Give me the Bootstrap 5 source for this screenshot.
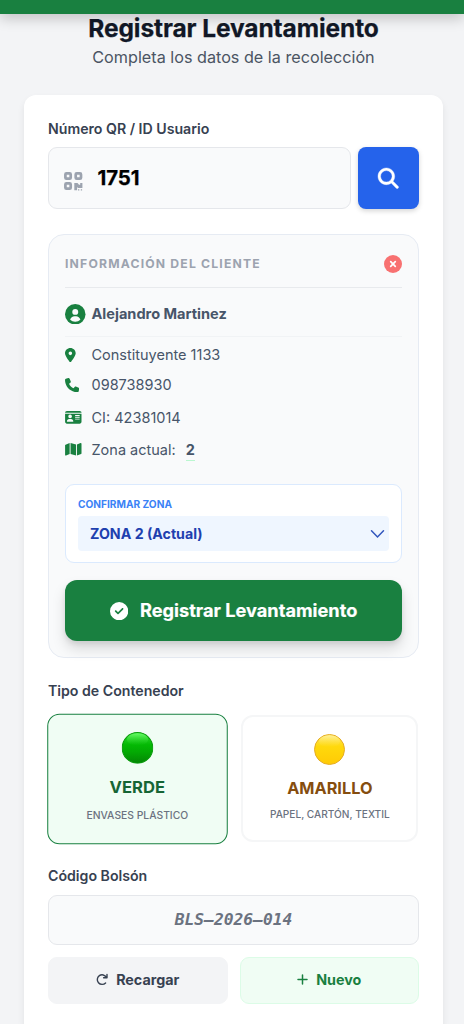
<!DOCTYPE html>
<html lang="es">
<head>
<meta charset="utf-8">
<meta name="viewport" content="width=device-width, initial-scale=1">
<title>Registrar Levantamiento</title>
<link href="https://cdn.jsdelivr.net/npm/bootstrap@5.3.0/dist/css/bootstrap.min.css" rel="stylesheet">
<style>
body{font-family:Inter,sans-serif;background:#f3f4f6;color:#374151}
svg{display:block;flex:none}
.topbar{height:14px;flex:none;background:#198040;box-shadow:0 4px 14px rgba(0,0,0,.22);z-index:5}
.page{padding:0 21px 0 24px}
.title{font-size:24.5px;font-weight:700;line-height:32px;color:#111827;margin-top:-2px;letter-spacing:-.1px;-webkit-text-stroke:.25px}
.subtitle{font-size:16.2px;line-height:24px;color:#4b5563;padding-top:1px}
.panel{background:#fff;border-radius:12px 12px 0 0;margin-top:26px;padding:24px 24px 0;box-shadow:0 4px 7px rgba(0,0,0,.08)}
.lbl{font-size:14.15px;font-weight:600;line-height:20px;color:#374151}
.field{background:#f9fafb;border:1px solid #e5e7eb;border-radius:9px}
.qr{height:62px;padding-left:15px;color:#9ca3af}
.qr span{font-size:20.4px;font-weight:700;color:#000;margin-left:14.5px;line-height:28px;letter-spacing:-.1px;-webkit-text-stroke:.25px}
.find{width:61px;height:62px;background:#2563eb;border-radius:8px;box-shadow:0 2px 5px rgba(0,0,0,.17);color:#fff;border:0}
.client{margin-top:25px;height:424px;background:#f9fafb;border:1px solid #e6ebf3;border-radius:16px;padding:0 16px}
.client-head{height:53px;padding-top:6px;border-bottom:1px solid #e8eaed;font-size:12.2px;font-weight:700;letter-spacing:1.18px;color:#9ca3af}
.client-name{height:49px;padding-top:4px;border-bottom:1px solid #f1f3f5;font-size:14.55px;font-weight:700;color:#475569}
.client-name span:last-child{padding-top:1px}
.info-row{height:32.2px;font-size:14.5px;color:#475569}
.green{color:#198040}
.icon-col{width:26.5px}
.zone-now{margin-left:10px;font-weight:700;border-bottom:1px solid #bbf7d0;line-height:20px;padding-top:1px}
.zone{margin-top:18.5px;height:79px;background:#fff;border:1px solid #dbeafe;border-radius:9px;padding:9px 12px}
.zone-label{font-size:10.15px;font-weight:700;line-height:20px;color:#3b82f6}
.zone-select{height:35px;margin-top:2px;background:#eff6ff;border-radius:4px;padding:0 4px 0 12px;font-size:14.2px;font-weight:700;color:#1e40af}
.submit{height:61px;margin-top:17px;background:#198040;border-radius:12px;color:#fff;font-size:18.2px;font-weight:700;-webkit-text-stroke:.2px;box-shadow:0 8px 14px rgba(0,0,0,.13),0 3px 5px rgba(0,0,0,.08)}
.types{gap:16px;margin-top:13.5px;padding-left:.8px}
.type{width:176.7px;height:127.5px;border-radius:12px;border:2px solid #f5f6f7;background:#fff;padding-top:15px}
.type.active{background:#f0fdf4;border:1.5px solid #198040;border-width:1.5px;transform:scale(1.02)}
.type-name{font-size:16.3px;font-weight:700;line-height:24px;margin-top:11px}
.type-note{font-size:10.15px;font-weight:500;line-height:15px;color:#6b7280;margin-top:7.5px}
.ball{width:31px;height:31px;margin-top:2px}
.code{height:49.5px;margin-top:9px;font-family:"DejaVu Sans Mono",monospace;font-size:16.3px;font-weight:700;font-style:italic;color:#6b7280}
.act{height:46.5px;width:179.5px;border-radius:9px;font-size:14.3px;font-weight:700;border:1px solid #f3f4f6;background:#f3f4f6;color:#374151;gap:8px;padding:0 0 2px}
.act.new{background:#f0fdf4;border-color:#dcfce7;color:#198040}
</style>
</head>
<body class="vh-100 overflow-hidden d-flex flex-column">
<header class="topbar position-relative"></header>
<main class="page flex-grow-1 d-flex flex-column">
  <div class="text-center">
    <h1 class="title mb-0">Registrar Levantamiento</h1>
    <p class="subtitle mb-0">Completa los datos de la recolección</p>
  </div>
  <section class="panel flex-grow-1">
    <div class="lbl">Número QR / ID Usuario</div>
    <div class="d-flex justify-content-between mt-2">
      <div class="field qr d-flex align-items-center flex-grow-1" style="margin-right:7px">
        <svg width="19" height="19" viewBox="0 0 19 19" style="margin-top:6px" fill="none" stroke="currentColor"><g stroke-width="2.7"><rect x="1.4" y="1.4" width="5.3" height="5.3" rx="1"/><rect x="11.7" y="1.4" width="5.3" height="5.3" rx="1"/><rect x="1.4" y="11.4" width="5.3" height="5.3" rx="1"/></g><path fill="currentColor" stroke="none" d="M10.3 11h3.2l1.5 1.8h1.2V11h2.2v5h-4.4l-.9-1v3.2h-2.8zM14 17.2h1.3v1.2H14zM16.8 17.2h1.3v1.2h-1.3z"/></svg>
        <span>1751</span>
      </div>
      <button class="find d-flex align-items-center justify-content-center p-0" aria-label="Buscar"><svg width="20.5" height="20.5" viewBox="0 0 512 512" fill="currentColor" stroke="currentColor" stroke-width="10" overflow="visible"><path d="M416 208c0 45.9-14.9 88.3-40 122.7L502.6 457.4c12.5 12.5 12.5 32.8 0 45.3s-32.8 12.5-45.3 0L330.7 376c-34.4 25.2-76.8 40-122.7 40C93.1 416 0 322.9 0 208S93.1 0 208 0S416 93.1 416 208zM208 352a144 144 0 1 0 0-288 144 144 0 1 0 0 288z"/></svg></button>
    </div>
    <div class="client">
      <div class="client-head d-flex align-items-center justify-content-between">
        <span>INFORMACIÓN DEL CLIENTE</span>
        <svg width="18" height="18" viewBox="0 0 18 18"><circle cx="9" cy="9" r="9" fill="#f87171"/><path d="M6.7 6.7l4.6 4.6M11.3 6.7l-4.6 4.6" stroke="#fff" stroke-width="1.7" stroke-linecap="round"/></svg>
      </div>
      <div class="client-name d-flex align-items-center">
        <span class="icon-col"><svg width="20.5" height="20.5" viewBox="0 0 20 20"><circle cx="10" cy="10" r="10" fill="#198040"/><circle cx="10" cy="7.7" r="2.9" fill="#f9fafb"/><path d="M5 15.3c.6-2.1 2.3-3.3 4.2-3.3h1.6c1.9 0 3.6 1.2 4.2 3.3A7.2 7.2 0 0 1 10 17.2a7.2 7.2 0 0 1-5-1.9z" fill="#f9fafb"/></svg></span>
        <span>Alejandro Martinez</span>
      </div>
      <div class="info-row d-flex align-items-center pt-1"><span class="icon-col green"><svg width="10.7" height="14.3" viewBox="0 0 384 512" fill="currentColor"><path d="M215.7 499.2C267 435 384 279.4 384 192C384 86 298 0 192 0S0 86 0 192c0 87.4 117 243 168.3 307.2c12.3 15.3 35.1 15.3 47.4 0zM192 128a64 64 0 1 1 0 128 64 64 0 1 1 0-128z"/></svg></span><span>Constituyente 1133</span></div>
      <div class="info-row d-flex align-items-center"><span class="icon-col green"><svg width="14.3" height="14.3" viewBox="0 0 512 512" fill="currentColor"><path d="M164.9 24.6c-7.7-18.6-28-28.5-47.4-23.2l-88 24C12.1 30.2 0 46 0 64C0 311.4 200.6 512 448 512c18 0 33.8-12.1 38.6-29.5l24-88c5.3-19.4-4.6-39.7-23.2-47.4l-96-40c-16.3-6.8-35.2-2.1-46.3 11.6L304.7 368C234.3 334.7 177.3 277.7 144 207.3L193.3 167c13.7-11.2 18.4-30 11.6-46.3l-40-96z"/></svg></span><span>098738930</span></div>
      <div class="info-row d-flex align-items-center"><span class="icon-col green"><svg width="16.6" height="14.6" viewBox="0 0 576 512"><path fill="currentColor" d="M0 96c0-35 29-64 64-64h448c35 0 64 29 64 64z"/><path fill="currentColor" fill-rule="evenodd" d="M0 128h576v288c0 35-29 64-64 64H64c-35 0-64-29-64-64zm176 32a64 64 0 1 0 0 128 64 64 0 1 0 0-128zM64 405c0 6 5 11 11 11h202c6 0 11-5 11-11 0-47-34-85-80-85h-64c-46 0-80 38-80 85zM352 176v32h160v-32zm0 64v32h160v-32zm0 64v32h160v-32z"/></svg></span><span>CI: 42381014</span></div>
      <div class="info-row d-flex align-items-center"><span class="icon-col green"><svg width="16.6" height="14.6" viewBox="0 0 576 512" fill="currentColor"><path d="M384 476.1L192 421.2V35.9L384 90.8V476.1zm32-1.2V88.4L543.1 37.5c15.8-6.3 32.9 5.3 32.9 22.3V394.6c0 9.8-6 18.6-15.1 22.3L416 474.8zM15.1 95.1L160 37.2V423.6L32.9 474.5C17.1 480.8 0 469.2 0 452.2V117.4c0-9.8 6-18.6 15.1-22.3z"/></svg></span><span>Zona actual:</span><span class="zone-now">2</span></div>
      <div class="zone">
        <div class="zone-label">CONFIRMAR ZONA</div>
        <div class="zone-select d-flex align-items-center justify-content-between"><span>ZONA 2 (Actual)</span><svg width="15" height="10" viewBox="0 0 15 10" fill="none" stroke="#3155bd" stroke-width="1.5" stroke-linecap="round"><path d="M1.5 1.7L7.5 7.9l6-6.2"/></svg></div>
      </div>
      <button class="submit w-100 border-0 p-0 d-flex align-items-center justify-content-center"><svg width="18.3" height="18.3" viewBox="0 0 512 512" fill="currentColor" style="margin-right:12px"><path d="M256 512A256 256 0 1 0 256 0a256 256 0 1 0 0 512zM369 209L241 337c-9.4 9.4-24.6 9.4-33.9 0l-64-64c-9.4-9.4-9.4-24.6 0-33.9s24.6-9.4 33.9 0l47 47L335 175c9.4-9.4 24.6-9.4 33.9 0s9.4 24.6 0 33.9z"/></svg>Registrar Levantamiento</button>
    </div>
    <div class="lbl" style="margin-top:23px">Tipo de Contenedor</div>
    <div class="types d-flex">
      <div class="type active d-flex flex-column align-items-center">
        <svg class="ball" viewBox="0 0 31 31"><defs><linearGradient id="g1" x2="0" y2="1"><stop offset="0" stop-color="#35dc35"/><stop offset=".4" stop-color="#04b904"/><stop offset=".65" stop-color="#03a803"/><stop offset="1" stop-color="#048604"/></linearGradient><linearGradient id="h1" x2="0" y2="1"><stop offset="0" stop-color="#6bff6b" stop-opacity=".9"/><stop offset="1" stop-color="#20cc20" stop-opacity="0"/></linearGradient></defs><circle cx="15.5" cy="15.5" r="15" fill="url(#g1)" stroke="#0b9b0d"/><ellipse cx="15.5" cy="7.2" rx="10.5" ry="6" fill="url(#h1)"/></svg>
        <div class="type-name" style="color:#166534">VERDE</div>
        <div class="type-note">ENVASES PLÁSTICO</div>
      </div>
      <div class="type d-flex flex-column align-items-center">
        <svg class="ball" viewBox="0 0 31 31"><defs><linearGradient id="g2" x2="0" y2="1"><stop offset="0" stop-color="#fee45a"/><stop offset=".4" stop-color="#ffd90c"/><stop offset="1" stop-color="#ffca05"/></linearGradient><linearGradient id="h2" x2="0" y2="1"><stop offset="0" stop-color="#fff2a0" stop-opacity=".9"/><stop offset="1" stop-color="#ffdf30" stop-opacity="0"/></linearGradient></defs><circle cx="15.5" cy="15.5" r="15" fill="url(#g2)" stroke="#e5ac26"/><ellipse cx="15.5" cy="7.2" rx="10.5" ry="6" fill="url(#h2)"/></svg>
        <div class="type-name" style="color:#854d0e">AMARILLO</div>
        <div class="type-note">PAPEL, CARTÓN, TEXTIL</div>
      </div>
    </div>
    <div class="lbl mt-4">Código Bolsón</div>
    <div class="field code d-flex align-items-center justify-content-center">BLS–2026–014</div>
    <div class="d-flex justify-content-between" style="margin-top:12.5px">
      <button class="act d-flex align-items-center justify-content-center"><svg width="12" height="13" viewBox="0 0 12 13" fill="none" stroke="currentColor" stroke-width="1.4" stroke-linecap="round" stroke-linejoin="round"><path d="M9.6 9.9A4.8 4.8 0 1 1 10.3 4.3M11 1.4v3.4H7.6"/></svg>Recargar</button>
      <button class="act new d-flex align-items-center justify-content-center"><svg width="11" height="11" viewBox="0 0 11 11" stroke="currentColor" stroke-width="1.5" stroke-linecap="round"><path d="M5.5 1v9M1 5.5h9"/></svg>Nuevo</button>
    </div>
  </section>
</main>
<script src="https://cdn.jsdelivr.net/npm/bootstrap@5.3.0/dist/js/bootstrap.bundle.min.js"></script>
</body>
</html>
